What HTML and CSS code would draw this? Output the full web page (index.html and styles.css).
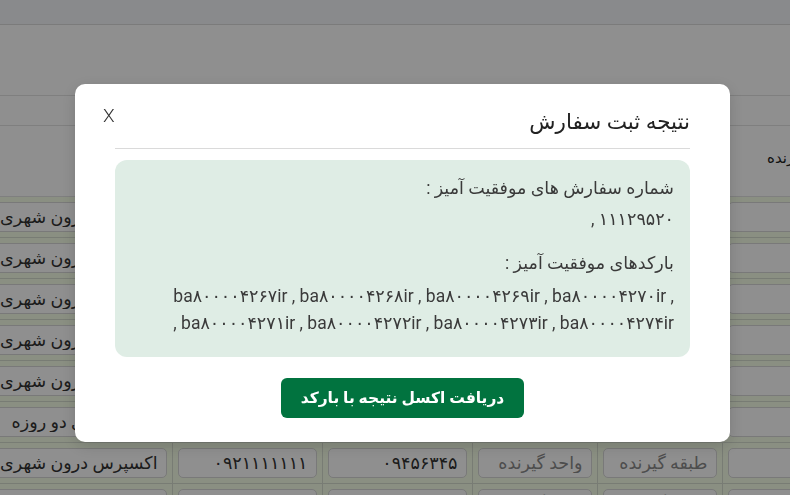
FILE: index.html
```html
<!DOCTYPE html>
<html lang="fa" dir="rtl">
<head>
<meta charset="utf-8">
<title>نتیجه ثبت سفارش</title>
<link rel="stylesheet" href="styles.css">
</head>
<body>
<div class="page">
  <div class="topbar"></div>
  <div class="band"></div>
  <div class="band band-sm"></div>
  <div class="table-wrap">
    <table class="grid">
      <colgroup>
        <col class="w-f"><col class="w-e"><col class="w-d"><col class="w-c"><col class="w-b"><col class="w-a">
      </colgroup>
      <thead>
        <tr><th>گیرنده</th><th></th><th></th><th></th><th></th><th></th></tr>
      </thead>
      <tbody>
        <tr><td><input class="field"></td><td><input class="field" placeholder="طبقه گیرنده"></td><td><input class="field" placeholder="واحد گیرنده"></td><td><input class="field" value="۰۹۴۵۶۳۴۵"></td><td><input class="field" value="۰۹۲۱۱۱۱۱۱۱"></td><td><input class="field" value="اکسپرس درون شهری"></td></tr>
        <tr><td><input class="field"></td><td><input class="field" placeholder="طبقه گیرنده"></td><td><input class="field" placeholder="واحد گیرنده"></td><td><input class="field" value="۰۹۴۵۶۳۴۵"></td><td><input class="field" value="۰۹۲۱۱۱۱۱۱۱"></td><td><input class="field" value="اکسپرس درون شهری"></td></tr>
        <tr><td><input class="field"></td><td><input class="field" placeholder="طبقه گیرنده"></td><td><input class="field" placeholder="واحد گیرنده"></td><td><input class="field" value="۰۹۴۵۶۳۴۵"></td><td><input class="field" value="۰۹۲۱۱۱۱۱۱۱"></td><td><input class="field" value="اکسپرس درون شهری"></td></tr>
        <tr><td><input class="field"></td><td><input class="field" placeholder="طبقه گیرنده"></td><td><input class="field" placeholder="واحد گیرنده"></td><td><input class="field" value="۰۹۴۵۶۳۴۵"></td><td><input class="field" value="۰۹۲۱۱۱۱۱۱۱"></td><td><input class="field" value="اکسپرس درون شهری"></td></tr>
        <tr><td><input class="field"></td><td><input class="field" placeholder="طبقه گیرنده"></td><td><input class="field" placeholder="واحد گیرنده"></td><td><input class="field" value="۰۹۴۵۶۳۴۵"></td><td><input class="field" value="۰۹۲۱۱۱۱۱۱۱"></td><td><input class="field" value="اکسپرس درون شهری"></td></tr>
        <tr><td><input class="field"></td><td><input class="field" placeholder="طبقه گیرنده"></td><td><input class="field" placeholder="واحد گیرنده"></td><td><input class="field" value="۰۹۴۵۶۳۴۵"></td><td><input class="field" value="۰۹۲۱۱۱۱۱۱۱"></td><td><input class="field" value="پیشتاز عادی دو روزه"></td></tr>
        <tr><td><input class="field"></td><td><input class="field" placeholder="طبقه گیرنده"></td><td><input class="field" placeholder="واحد گیرنده"></td><td><input class="field" value="۰۹۴۵۶۳۴۵"></td><td><input class="field" value="۰۹۲۱۱۱۱۱۱۱"></td><td><input class="field" value="اکسپرس درون شهری"></td></tr>
        <tr><td><input class="field"></td><td><input class="field" placeholder="طبقه گیرنده"></td><td><input class="field" placeholder="واحد گیرنده"></td><td><input class="field" value="۰۹۴۵۶۳۴۵"></td><td><input class="field" value="۰۹۲۱۱۱۱۱۱۱"></td><td><input class="field" value="اکسپرس درون شهری"></td></tr>
      </tbody>
    </table>
  </div>
</div>

<div class="backdrop">
  <div class="modal" role="dialog">
    <div class="modal-head">
      <h2 class="modal-title">نتیجه ثبت سفارش</h2>
      <button class="close" type="button">X</button>
    </div>
    <div class="result">
      <div class="label">شماره سفارش های موفقیت آمیز :</div>
      <div class="value">۱۱۱۲۹۵۲۰ ,</div>
      <div class="label label-gap">بارکدهای موفقیت آمیز :</div>
      <div class="value value-list">ba۸۰۰۰۰۴۲۶۷ir , ba۸۰۰۰۰۴۲۶۸ir , ba۸۰۰۰۰۴۲۶۹ir , ba۸۰۰۰۰۴۲۷۰ir , ba۸۰۰۰۰۴۲۷۱ir , ba۸۰۰۰۰۴۲۷۲ir , ba۸۰۰۰۰۴۲۷۳ir , ba۸۰۰۰۰۴۲۷۴ir ,</div>
    </div>
    <div class="actions">
      <button class="btn-excel" type="button">دریافت اکسل نتیجه با بارکد</button>
    </div>
  </div>
</div>
</body>
</html>
```
FILE: styles.css
```css
* { box-sizing: border-box; }

html, body {
  margin: 0;
  height: 100%;
}

body {
  font-family: Roboto, "DejaVu Sans", sans-serif;
  background: #ffffff;
  color: #333;
  overflow: hidden;
}

.page {
  width: 100%;
  overflow: hidden;
}

.topbar {
  height: 25px;
  background: #f4f6fa;
  border-bottom: 1px solid #dcdcdc;
}

.band {
  height: 71px;
  background: #ffffff;
  border-bottom: 1px solid #e2e2e2;
}

.band-sm {
  height: 30px;
}

.table-wrap {
  direction: rtl;
  margin-right: -62px;
}

.grid {
  border-collapse: collapse;
  table-layout: fixed;
  width: 880px;
}

.w-f { width: 130px; }
.w-e { width: 125px; }
.w-d { width: 125px; }
.w-c { width: 150px; }
.w-b { width: 150px; }
.w-a { width: 200px; }

.grid th {
  height: 70px;
  font-weight: normal;
  font-size: 15px;
  color: #222;
  text-align: center;
  padding: 0 0 6px;
  border-bottom: 1px solid #e2e2e2;
}

.grid td {
  background: #f6ffe8;
  padding: 5px 5px;
  border-bottom: 1px solid #d6ddcf;
  border-left: 1px solid #d6ddcf;
  height: 41px;
}

.field {
  display: block;
  width: 100%;
  height: 30px;
  border: 1px solid #d8d8d8;
  border-radius: 5px;
  background: #ffffff;
  font-family: Roboto, "DejaVu Sans", sans-serif;
  font-size: 17.5px;
  color: #333;
  padding: 0 8px;
  direction: rtl;
  text-align: right;
}

.field::placeholder {
  color: #8a8a8a;
}

.backdrop {
  position: fixed;
  inset: 0;
  background: rgba(0, 0, 0, 0.44);
  display: flex;
  align-items: flex-start;
  justify-content: flex-start;
  padding: 84px 0 0 75px;
  direction: ltr;
}

.modal {
  direction: rtl;
  width: 655px;
  background: #ffffff;
  border-radius: 10px;
  padding: 22px 40px 24px;
  box-shadow: 0 4px 16px rgba(0, 0, 0, 0.15);
}

.modal-head {
  display: flex;
  justify-content: space-between;
  align-items: flex-start;
  padding-bottom: 10px;
  border-bottom: 1px solid #dadada;
}

.modal-title {
  margin: 0;
  font-size: 21.5px;
  font-weight: normal;
  line-height: 32px;
  color: #222;
}

.close {
  border: 0;
  background: transparent;
  padding: 0;
  margin: 0 0 0 -12px;
  font-family: Roboto, "DejaVu Sans", sans-serif;
  font-size: 19px;
  font-weight: 300;
  line-height: 20px;
  color: #333;
  cursor: pointer;
}

.result {
  margin-top: 11px;
  height: 197px;
  background: #dfede5;
  border-radius: 12px;
  padding: 14px 16px 0;
  color: #3a3a3a;
  font-size: 17.5px;
}

.label {
  line-height: 28px;
}

.label-gap {
  margin-top: 16px;
}

.value {
  line-height: 27px;
  margin-top: 4px;
}

.value-list {
  margin-top: 6px;
}

.actions {
  display: flex;
  justify-content: center;
  margin-top: 21px;
}

.btn-excel {
  height: 40px;
  padding: 0 20px;
  min-width: 241px;
  border: 0;
  border-radius: 6px;
  background: #01733f;
  color: #ffffff;
  font-family: Roboto, "DejaVu Sans", sans-serif;
  font-size: 15.5px;
  font-weight: bold;
  cursor: pointer;
}
```
